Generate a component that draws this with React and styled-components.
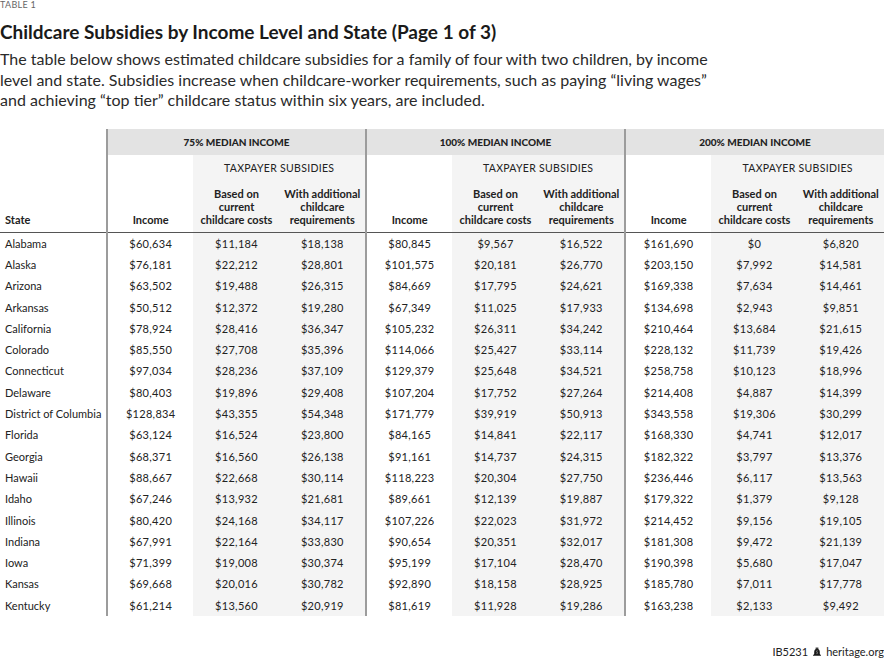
import React from "react";
import styled, { createGlobalStyle } from "styled-components";

const GlobalStyle = createGlobalStyle`
  body {
    margin: 0;
    background: #ffffff;
    font-family: Lato, "Open Sans", sans-serif;
    color: #222;
  }
`;

const Page = styled.div`
  width: 884px;
  height: 661px;
  overflow: hidden;
  display: flex;
  flex-direction: column;
`;

const Label = styled.div`
  font-size: 9px;
  letter-spacing: 0.3px;
  color: #666;
  line-height: 10px;
`;

const Title = styled.h1`
  margin: 10px 0 0 0;
  font-size: 19px;
  line-height: 24px;
  font-weight: 700;
  color: #1a1a1a;
`;

const Intro = styled.p`
  margin: 5px 0 0 0;
  width: 720px;
  font-size: 16px;
  line-height: 20.5px;
  color: #2a2a2a;
`;

const Table = styled.table`
  margin-top: 18px;
  width: 884px;
  border-collapse: collapse;
  table-layout: fixed;
  font-size: 11px;
  color: #222;
`;

const GroupHead = styled.th`
  background: #e3e3e3;
  height: 26px;
  padding: 0;
  font-size: 10px;
  font-weight: 900;
  text-align: center;
  border-left: 2px solid #9c9c9c;
`;

const SubHead = styled.th`
  background: ${(p) => (p.shade ? "#f4f4f4" : "#fff")};
  height: 26px;
  padding: 0;
  font-weight: 400;
  font-size: 10.5px;
  letter-spacing: 0.3px;
  text-align: center;
  border-left: ${(p) => (p.divider ? "2px solid #9c9c9c" : "none")};
`;

const ColHead = styled.th`
  background: ${(p) => (p.shade ? "#f4f4f4" : "#fff")};
  height: 45px;
  padding: 0 0 6px ${(p) => (p.left ? "5px" : "0")};
  vertical-align: bottom;
  font-weight: 700;
  font-size: 11px;
  line-height: 13px;
  white-space: nowrap;
  text-align: ${(p) => (p.left ? "left" : "center")};
  border-left: ${(p) => (p.divider ? "2px solid #9c9c9c" : "none")};
  border-bottom: 1px solid #555;
`;

const Cell = styled.td`
  height: 21.3px;
  padding: 0;
  text-align: ${(p) => (p.left ? "left" : "center")};
  padding-left: ${(p) => (p.left ? "5px" : "0")};
  background: ${(p) => (p.shade ? "#f4f4f4" : "#fff")};
  border-left: ${(p) => (p.divider ? "2px solid #9c9c9c" : "none")};
  white-space: nowrap;
  letter-spacing: ${(p) => (p.left ? "0" : "0.3px")};
`;

const Footer = styled.div`
  margin-top: auto;
  padding-bottom: 3px;
  display: flex;
  justify-content: flex-end;
  align-items: center;
  gap: 4px;
  font-size: 11px;
  color: #222;
`;

const rows = [
  ["Alabama", "$60,634", "$11,184", "$18,138", "$80,845", "$9,567", "$16,522", "$161,690", "$0", "$6,820"],
  ["Alaska", "$76,181", "$22,212", "$28,801", "$101,575", "$20,181", "$26,770", "$203,150", "$7,992", "$14,581"],
  ["Arizona", "$63,502", "$19,488", "$26,315", "$84,669", "$17,795", "$24,621", "$169,338", "$7,634", "$14,461"],
  ["Arkansas", "$50,512", "$12,372", "$19,280", "$67,349", "$11,025", "$17,933", "$134,698", "$2,943", "$9,851"],
  ["California", "$78,924", "$28,416", "$36,347", "$105,232", "$26,311", "$34,242", "$210,464", "$13,684", "$21,615"],
  ["Colorado", "$85,550", "$27,708", "$35,396", "$114,066", "$25,427", "$33,114", "$228,132", "$11,739", "$19,426"],
  ["Connecticut", "$97,034", "$28,236", "$37,109", "$129,379", "$25,648", "$34,521", "$258,758", "$10,123", "$18,996"],
  ["Delaware", "$80,403", "$19,896", "$29,408", "$107,204", "$17,752", "$27,264", "$214,408", "$4,887", "$14,399"],
  ["District of Columbia", "$128,834", "$43,355", "$54,348", "$171,779", "$39,919", "$50,913", "$343,558", "$19,306", "$30,299"],
  ["Florida", "$63,124", "$16,524", "$23,800", "$84,165", "$14,841", "$22,117", "$168,330", "$4,741", "$12,017"],
  ["Georgia", "$68,371", "$16,560", "$26,138", "$91,161", "$14,737", "$24,315", "$182,322", "$3,797", "$13,376"],
  ["Hawaii", "$88,667", "$22,668", "$30,114", "$118,223", "$20,304", "$27,750", "$236,446", "$6,117", "$13,563"],
  ["Idaho", "$67,246", "$13,932", "$21,681", "$89,661", "$12,139", "$19,887", "$179,322", "$1,379", "$9,128"],
  ["Illinois", "$80,420", "$24,168", "$34,117", "$107,226", "$22,023", "$31,972", "$214,452", "$9,156", "$19,105"],
  ["Indiana", "$67,991", "$22,164", "$33,830", "$90,654", "$20,351", "$32,017", "$181,308", "$9,472", "$21,139"],
  ["Iowa", "$71,399", "$19,008", "$30,374", "$95,199", "$17,104", "$28,470", "$190,398", "$5,680", "$17,047"],
  ["Kansas", "$69,668", "$20,016", "$30,782", "$92,890", "$18,158", "$28,925", "$185,780", "$7,011", "$17,778"],
  ["Kentucky", "$61,214", "$13,560", "$20,919", "$81,619", "$11,928", "$19,286", "$163,238", "$2,133", "$9,492"],
];

const groups = ["75% MEDIAN INCOME", "100% MEDIAN INCOME", "200% MEDIAN INCOME"];

// liberty bell mark
const Bell = () => (
  <svg width="10" height="10" viewBox="0 0 10 10">
    <rect x="3.6" y="0.6" width="2.8" height="1.2" fill="#1a1a1a" />
    <path d="M5 1.8c-1.9 0-2.8 1.3-2.8 3.3v1.8L1 8.2v.6h8v-.6L7.8 6.9V5.1C7.8 3.1 6.9 1.8 5 1.8z" fill="#1a1a1a" />
    <path d="M5.2 3.4l-.5 1.4.6.8-.4 1.5" stroke="#fff" strokeWidth="0.5" fill="none" />
  </svg>
);

const App = () => (
  <>
    <GlobalStyle />
    <Page>
      <Label>TABLE 1</Label>
      <Title>Childcare Subsidies by Income Level and State (Page 1 of 3)</Title>
      <Intro>
        The table below shows estimated childcare subsidies for a family of four with two children, by income
        level and state. Subsidies increase when childcare-worker requirements, such as paying “living wages”
        and achieving “top tier” childcare status within six years, are included.
      </Intro>
      <Table>
        <colgroup>
          <col style={{ width: 107 }} />
          {Array.from({ length: 9 }).map((_, i) => (
            <col key={i} />
          ))}
        </colgroup>
        <thead>
          <tr>
            <ColHead rowSpan={3} left>State</ColHead>
            {groups.map((g) => (
              <GroupHead key={g} colSpan={3}>{g}</GroupHead>
            ))}
          </tr>
          <tr>
            {groups.map((g) => (
              <React.Fragment key={g}>
                <SubHead divider />
                <SubHead shade colSpan={2}>TAXPAYER SUBSIDIES</SubHead>
              </React.Fragment>
            ))}
          </tr>
          <tr>
            {groups.map((g) => (
              <React.Fragment key={g}>
                <ColHead divider>Income</ColHead>
                <ColHead shade>
                  Based on
                  <br />
                  current
                  <br />
                  childcare costs
                </ColHead>
                <ColHead shade>
                  With additional
                  <br />
                  childcare
                  <br />
                  requirements
                </ColHead>
              </React.Fragment>
            ))}
          </tr>
        </thead>
        <tbody>
          {rows.map((r) => (
            <tr key={r[0]}>
              <Cell left>{r[0]}</Cell>
              {r.slice(1).map((v, i) => (
                <Cell key={i} divider={i % 3 === 0} shade={i % 3 !== 0}>
                  {v}
                </Cell>
              ))}
            </tr>
          ))}
        </tbody>
      </Table>
      <Footer>
        IB5231 <Bell /> heritage.org
      </Footer>
    </Page>
  </>
);

export default App;
